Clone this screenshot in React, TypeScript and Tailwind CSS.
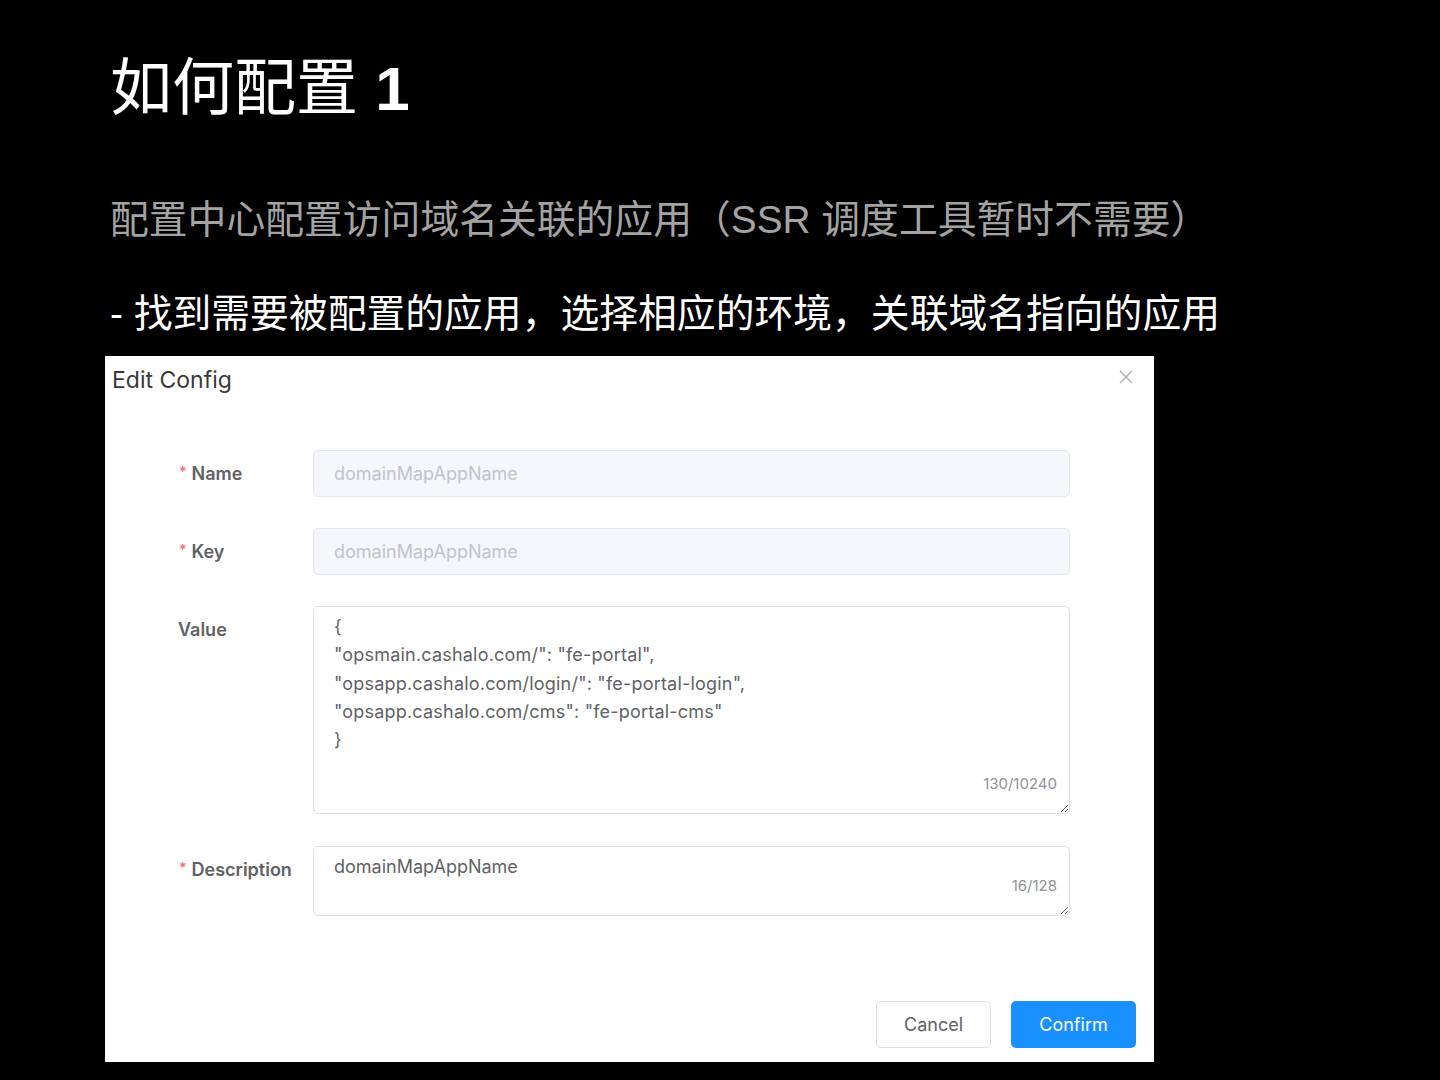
import React from "react";

const cjk = { fontFamily: '"Liberation Sans", "Noto Sans CJK SC", sans-serif' };
const ui = { fontFamily: 'Inter, "Liberation Sans", sans-serif' };

const valueText = `{
"opsmain.cashalo.com/": "fe-portal",
"opsapp.cashalo.com/login/": "fe-portal-login",
"opsapp.cashalo.com/cms": "fe-portal-cms"
}`;

type RowProps = {
	label: string;
	required?: boolean;
	children: React.ReactNode;
};

const FormRow = ({ label, required, children }: RowProps) => (
	<div className="flex items-start">
		<div className="w-[134px] h-[47px] flex items-center text-[18px] font-semibold text-[#606266]">
			{required && <span className="text-[#f56c6c] mr-[5px] text-[14px] -mt-[4px]">*</span>}
			<span className={required ? "" : "-ml-px"}>{label}</span>
		</div>
		<div className="w-[757px]">{children}</div>
	</div>
);

export default function App() {
	return (
		<div className="w-[1440px] h-[1080px] bg-black overflow-hidden" style={cjk}>
			<div className="pl-[110px] pt-[57px]">
				<h1 className="text-[62px] leading-[64px] text-white font-normal">
					如何配置 <span className="font-bold">1</span>
				</h1>
				<p className="mt-[79px] text-[38.8px] leading-[40px] text-[#a3a3a3]">
					配置中心配置访问域名关联的应用（SSR 调度工具暂时不需要）
				</p>
				<p className="mt-[54px] text-[38.8px] leading-[40px] text-white">
					- 找到需要被配置的应用，选择相应的环境，关联域名指向的应用
				</p>
			</div>

			<div className="ml-[105px] mt-[22px] w-[1049px] h-[706px] bg-white relative" style={ui}>
				<div className="pl-[7px] pt-[10px] text-[23px] leading-[28px] text-[#3a3a3a]">Edit Config</div>
				<button className="absolute right-[20px] top-[13px] text-[#a8abb2]">
					<svg width="16" height="16" viewBox="0 0 16 16" fill="none" stroke="currentColor" strokeWidth="1.4">
						<path d="M2 2 L14 14 M14 2 L2 14" />
					</svg>
				</button>

				<div className="pl-[74px] pt-[56px] flex flex-col gap-[31px]">
					<FormRow label="Name" required>
						<input
							disabled
							placeholder="domainMapAppName"
							className="w-full h-[47px] rounded-[5px] border border-[#e4e7ed] bg-[#f5f7fa] px-[20px] text-[18px] placeholder:text-[#c0c4cc] outline-none"
						/>
					</FormRow>
					<FormRow label="Key" required>
						<input
							disabled
							placeholder="domainMapAppName"
							className="w-full h-[47px] rounded-[5px] border border-[#e4e7ed] bg-[#f5f7fa] px-[20px] text-[18px] placeholder:text-[#c0c4cc] outline-none"
						/>
					</FormRow>
					<FormRow label="Value">
						<div className="relative">
							<textarea
								readOnly
								defaultValue={valueText}
								className="block w-full h-[208px] rounded-[5px] border border-[#dcdfe6] px-[20px] pt-[6px] text-[18px] leading-[28.3px] tracking-[0.2px] text-[#606266] resize-y outline-none"
							/>
							<span className="absolute right-[13px] bottom-[21px] text-[15px] leading-[18px] text-[#909399]">
								130/10240
							</span>
						</div>
					</FormRow>
					<div className="mt-px">
						<FormRow label="Description" required>
							<div className="relative">
								<textarea
									readOnly
									defaultValue="domainMapAppName"
									className="block w-full h-[70px] rounded-[5px] border border-[#dcdfe6] px-[20px] pt-[6px] text-[18px] leading-[28px] text-[#606266] resize-y outline-none"
								/>
								<span className="absolute right-[13px] bottom-[21px] text-[15px] leading-[18px] text-[#909399]">
									16/128
								</span>
							</div>
						</FormRow>
					</div>
				</div>

				<div className="absolute right-[18px] bottom-[14px] flex gap-[20px]">
					<button className="w-[115px] h-[47px] rounded-[5px] border border-[#dcdfe6] bg-white text-[18px] text-[#606266]">
						Cancel
					</button>
					<button className="w-[125px] h-[47px] rounded-[5px] bg-[#1890ff] text-[18px] text-white">
						Confirm
					</button>
				</div>
			</div>
		</div>
	);
}
